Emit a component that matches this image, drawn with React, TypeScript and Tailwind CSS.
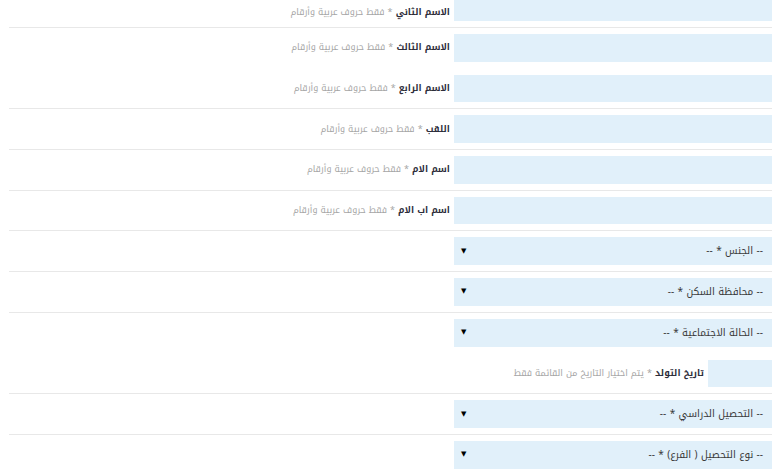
import React from "react";

type Row =
  | { kind: "text"; label: string; hint: string; line: boolean }
  | { kind: "select"; text: string; line: boolean }
  | { kind: "date"; label: string; hint: string; line: boolean };

const rows: Row[] = [
  { kind: "text", label: "الاسم الثاني", hint: "فقط حروف عربية وأرقام", line: true },
  { kind: "text", label: "الاسم الثالث", hint: "فقط حروف عربية وأرقام", line: false },
  { kind: "text", label: "الاسم الرابع", hint: "فقط حروف عربية وأرقام", line: true },
  { kind: "text", label: "اللقب", hint: "فقط حروف عربية وأرقام", line: true },
  { kind: "text", label: "اسم الام", hint: "فقط حروف عربية وأرقام", line: true },
  { kind: "text", label: "اسم اب الام", hint: "فقط حروف عربية وأرقام", line: true },
  { kind: "select", text: "-- الجنس * --", line: true },
  { kind: "select", text: "-- محافظة السكن * --", line: true },
  { kind: "select", text: "-- الحالة الاجتماعية * --", line: false },
  { kind: "date", label: "تاريخ التولد", hint: "يتم اختيار التاريخ من القائمة فقط", line: true },
  { kind: "select", text: "-- التحصيل الدراسي * --", line: true },
  { kind: "select", text: "-- نوع التحصيل ( الفرع) * --", line: true },
];

function Label({ label, hint, first }: { label: string; hint: string; first?: boolean }) {
  return (
    <span
      className={
        "text-[9px] leading-none whitespace-nowrap " + (first ? "translate-y-[5px]" : "")
      }
    >
      <span className="font-bold text-[#2d2d3a]">{label}</span>
      <span className="text-[#a6a6a6]"> * {hint}</span>
    </span>
  );
}

export default function App() {
  return (
    <div
      dir="rtl"
      className="w-[780px] h-[470px] overflow-hidden bg-white"
      style={{ fontFamily: '"Noto Kufi Arabic", "DejaVu Sans", sans-serif' }}
    >
      <div className="mt-[-12.7px] pr-[8px] pl-[9px]">
        {rows.map((r, i) => (
          <div
            key={i}
            className={
              "pt-[6px] pb-[6px] border-b " +
              (r.line ? "border-[#e8e8e8]" : "border-transparent")
            }
          >
            {r.kind === "text" && (
              <div className="flex items-center gap-[4px]">
                <div className="w-[318px] h-[27.7px] bg-[#e1f0fa]" />
                <Label label={r.label} hint={r.hint} first={i === 0} />
              </div>
            )}
            {r.kind === "date" && (
              <div className="flex items-center gap-[4px]">
                <div className="w-[64px] h-[27.7px] bg-[#e1f0fa]" />
                <Label label={r.label} hint={r.hint} />
              </div>
            )}
            {r.kind === "select" && (
              <div className="w-[318px] h-[27.7px] bg-[#e1f0fa] flex items-center justify-between pr-[9px] pl-[7px]">
                <span className="text-[10px] leading-none text-[#3a3a3a] whitespace-nowrap">
                  {r.text}
                </span>
                <span
                  className="text-[7px] leading-none text-black"
                  style={{ fontFamily: '"DejaVu Sans", sans-serif' }}
                >
                  ▼
                </span>
              </div>
            )}
          </div>
        ))}
      </div>
    </div>
  );
}
